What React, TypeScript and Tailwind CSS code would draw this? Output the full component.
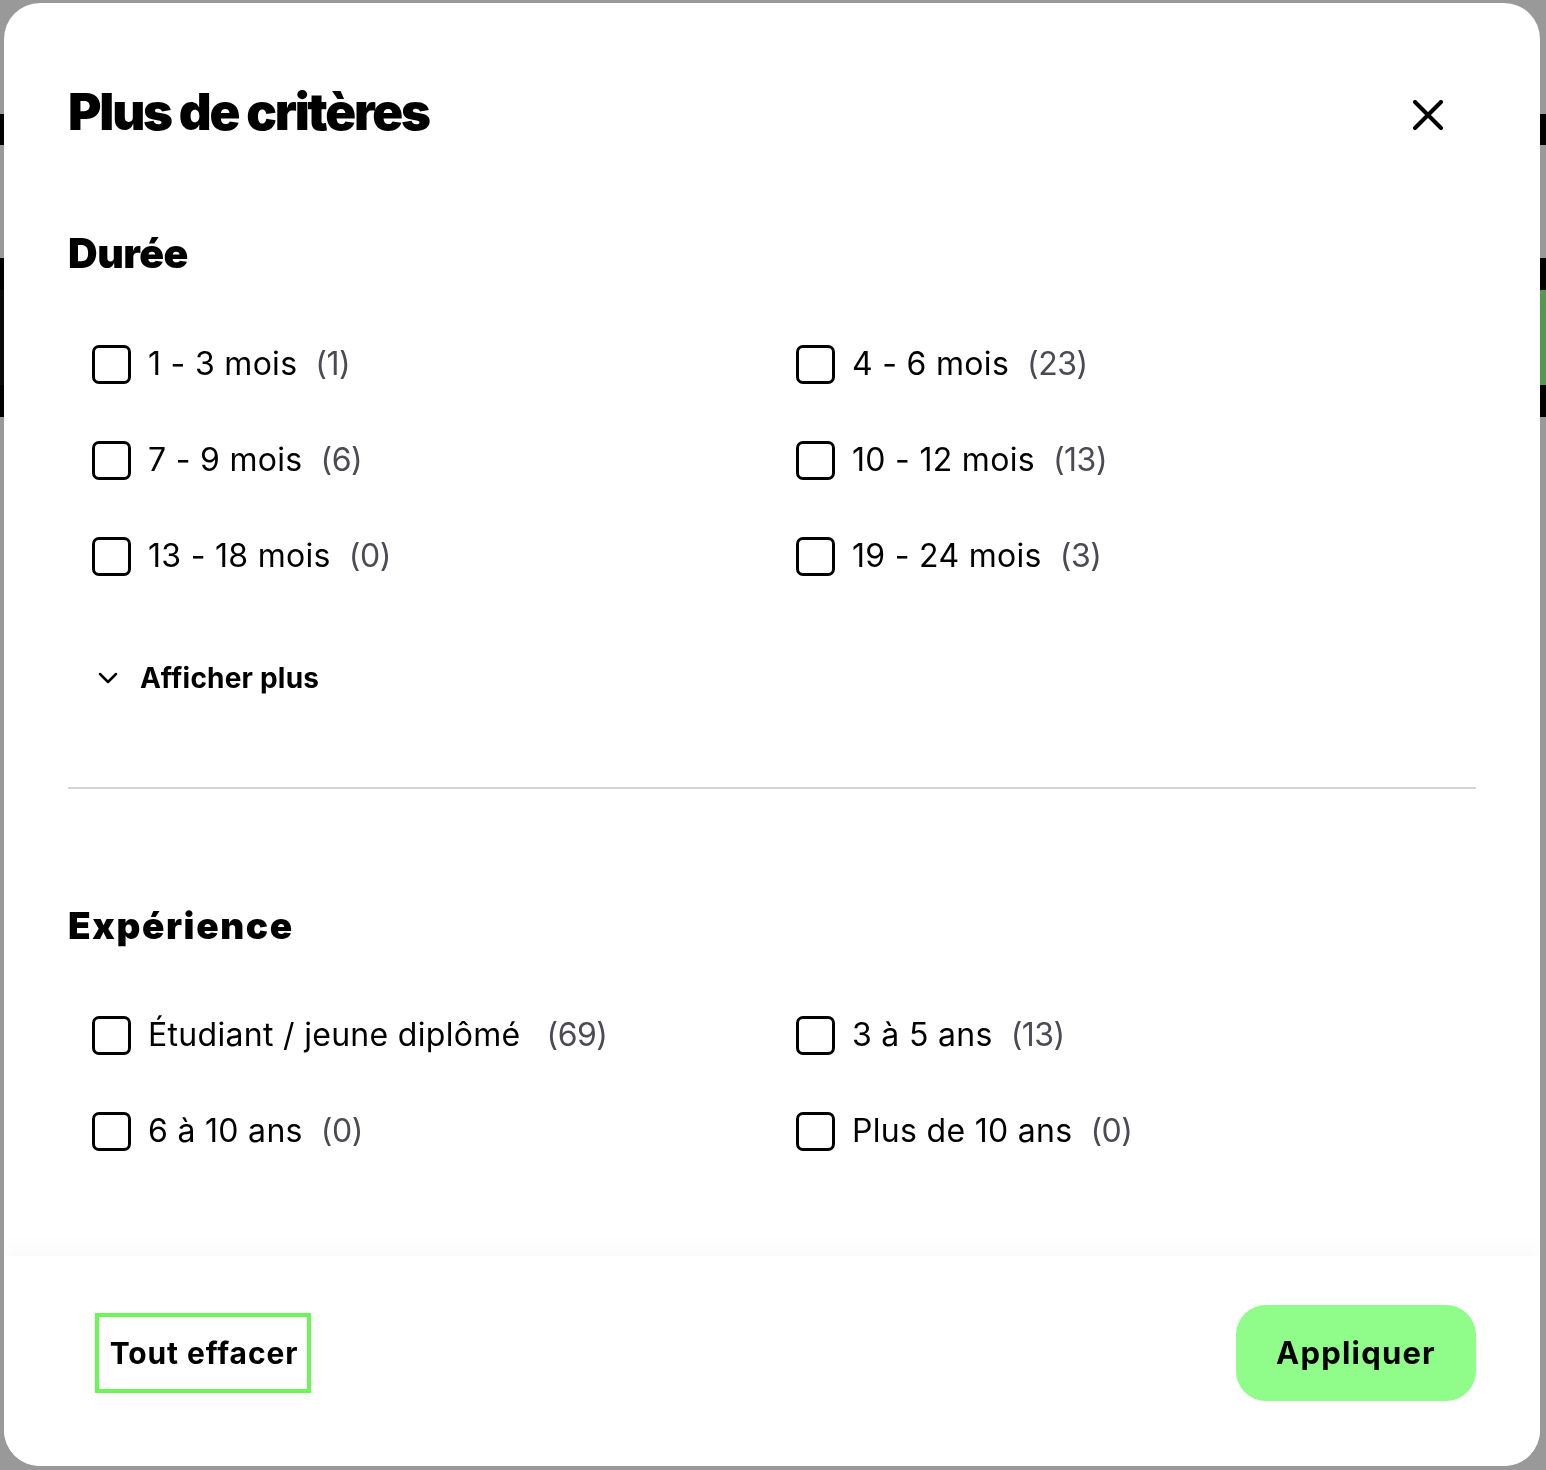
import { useState } from "react";

type Option = { label: string; count: number; gap?: string };

const duree: Option[] = [
  { label: "1 - 3 mois", count: 1 },
  { label: "4 - 6 mois", count: 23 },
  { label: "7 - 9 mois", count: 6 },
  { label: "10 - 12 mois", count: 13 },
  { label: "13 - 18 mois", count: 0 },
  { label: "19 - 24 mois", count: 3 },
];

const experience: Option[] = [
  { label: "Étudiant / jeune diplômé", count: 69, gap: "ml-[26px]" },
  { label: "3 à 5 ans", count: 13 },
  { label: "6 à 10 ans", count: 0 },
  { label: "Plus de 10 ans", count: 0 },
];

const body = "font-['Inter',sans-serif]";

const CheckRow = ({ option, checked, onToggle }: { option: Option; checked: boolean; onToggle: () => void }) => (
  <label className="flex h-[96px] items-center pl-6 cursor-pointer">
    <input type="checkbox" className="sr-only" checked={checked} onChange={onToggle} />
    <span
      className={`w-[39px] h-[39px] shrink-0 rounded-[7px] border-[3px] border-black ${checked ? "bg-black" : "bg-white"}`}
    />
    <span className="ml-[17px] text-[32px] text-black tracking-[0.3px]">{option.label}</span>
    <span className={`${option.gap ?? "ml-[18px]"} text-[32px] text-[#4b4b55] tracking-[-0.5px]`}>({option.count})</span>
  </label>
);

const CheckGrid = ({ options, selected, toggle }: { options: Option[]; selected: string[]; toggle: (l: string) => void }) => (
  <div className="grid grid-cols-2">
    {options.map((o) => (
      <CheckRow key={o.label} option={o} checked={selected.includes(o.label)} onToggle={() => toggle(o.label)} />
    ))}
  </div>
);

const App = () => {
  const [selected, setSelected] = useState<string[]>([]);
  const toggle = (l: string) =>
    setSelected((s) => (s.includes(l) ? s.filter((x) => x !== l) : [...s, l]));

  return (
    <div className={`relative w-[1546px] h-[1470px] overflow-hidden bg-white ${body}`}>
      {/* page behind the overlay */}
      <div className="flex flex-col">
        <div className="h-[114px]" />
        <div className="h-[31px] bg-black" />
        <div className="h-[113px]" />
        <div className="h-[32px] bg-black" />
        <div className="h-[95px] flex">
          <div className="flex-1 bg-[#111]" />
          <div className="w-[300px] bg-[#90fc89]" />
        </div>
        <div className="h-[32px] bg-black" />
      </div>

      {/* overlay + modal */}
      <div className="fixed inset-0 bg-black/40 pt-[3px] pl-[4px] pr-[6px] pb-[4px]">
        <div className="h-full bg-white rounded-[36px] flex flex-col overflow-hidden">
          <div className="flex-1 px-16 pt-[83px]">
            <div className="flex items-center justify-between">
              <h1 className="text-[51px] leading-none font-black tracking-[-2.2px] text-black">Plus de critères</h1>
              <button className="mr-[33px] mt-[6px]" aria-label="Fermer">
                <svg width="30" height="30" viewBox="0 0 30 30" fill="none" stroke="black" strokeWidth="4" strokeLinecap="round">
                  <path d="M2 2L28 28M28 2L2 28" />
                </svg>
              </button>
            </div>

            <h2 className="mt-[96px] text-[41px] leading-none font-black tracking-[-0.5px] text-black">Durée</h2>
            <div className="mt-[42px]">
              <CheckGrid options={duree} selected={selected} toggle={toggle} />
            </div>

            <button className="mt-[54px] h-10 flex items-center pl-[30px] gap-[22px]">
              <svg width="20" height="12" viewBox="0 0 20 12" fill="none" stroke="black" strokeWidth="2.5" strokeLinecap="round" strokeLinejoin="round">
                <path d="M2 2L10 10L18 2" />
              </svg>
              <span className="text-[28px] font-bold text-black tracking-[0.2px]">Afficher plus</span>
            </button>

            <div className="mt-[89px] h-[2px] bg-[#d4d4d4]" />

            <h2 className="mt-[118px] text-[37px] leading-none font-black tracking-[1.6px] text-black">Expérience</h2>
            <div className="mt-[43px]">
              <CheckGrid options={experience} selected={selected} toggle={toggle} />
            </div>
          </div>

          <div className="flex items-center justify-between px-16 pt-[49px] pb-[65px] bg-white shadow-[0_-10px_20px_rgba(0,0,0,0.025)]">
            <button className="ml-[27px] h-[80px] w-[216px] border-4 border-[#6cf655] pl-[2px] text-[30px] font-bold tracking-[0.9px] text-black">
              Tout effacer
            </button>
            <button className="h-[96px] w-[240px] rounded-[30px] bg-[#90fc89] text-[31px] font-bold tracking-[1.2px] text-black">
              Appliquer
            </button>
          </div>
        </div>
      </div>
    </div>
  );
};

export default App;
